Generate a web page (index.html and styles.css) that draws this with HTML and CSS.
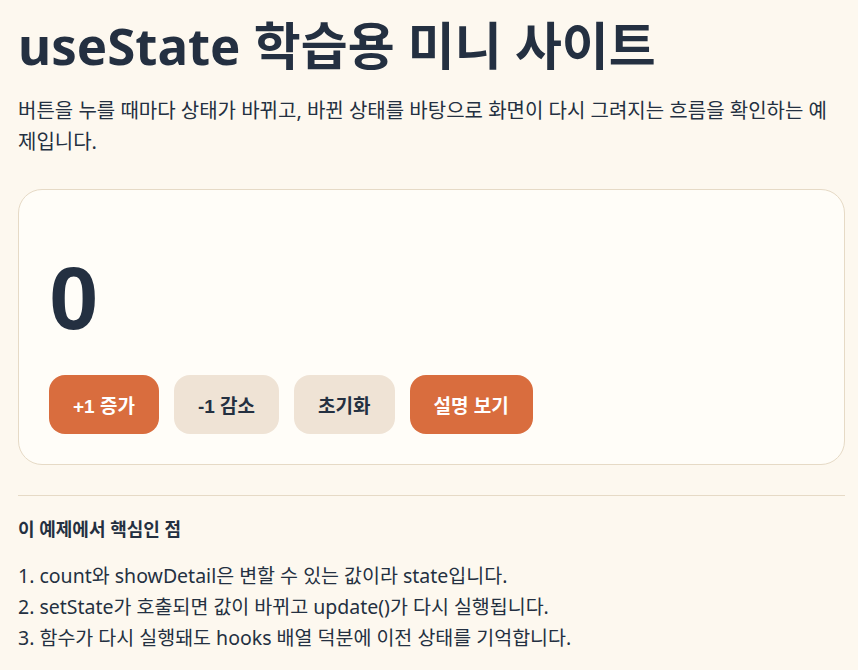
FILE: index.html
```html
<!DOCTYPE html>
<html lang="ko">
<head>
  <meta charset="UTF-8" />
  <meta name="viewport" content="width=device-width, initial-scale=1.0" />
  <title>useState 학습용 미니 사이트</title>
  <link rel="stylesheet" href="styles.css">
</head>
<body>
  <div class="page">
    <h1>useState 학습용 미니 사이트</h1>
    <p class="intro">버튼을 누를 때마다 상태가 바뀌고, 바뀐 상태를 바탕으로 화면이 다시 그려지는 흐름을 확인하는 예제입니다.</p>

    <div class="card">
      <div class="count" id="count">0</div>
      <div class="actions">
        <button class="btn primary" id="inc">+1 증가</button>
        <button class="btn soft" id="dec">-1 감소</button>
        <button class="btn soft" id="reset">초기화</button>
        <button class="btn primary" id="toggle">설명 보기</button>
      </div>
      <p class="detail" id="detail" hidden>지금 count 값은 state로 저장되어 있습니다.</p>
    </div>

    <hr class="divider">

    <h2>이 예제에서 핵심인 점</h2>
    <ol class="points">
      <li>1. count와 showDetail은 변할 수 있는 값이라 state입니다.</li>
      <li>2. setState가 호출되면 값이 바뀌고 update()가 다시 실행됩니다.</li>
      <li>3. 함수가 다시 실행돼도 hooks 배열 덕분에 이전 상태를 기억합니다.</li>
    </ol>
  </div>

  <script>
    let count = 0;
    let showDetail = false;
    const countEl = document.getElementById('count');
    const detailEl = document.getElementById('detail');
    const toggleBtn = document.getElementById('toggle');

    function update() {
      countEl.textContent = count;
      detailEl.hidden = !showDetail;
      toggleBtn.textContent = showDetail ? '설명 숨기기' : '설명 보기';
    }

    document.getElementById('inc').addEventListener('click', function() { count++; update(); });
    document.getElementById('dec').addEventListener('click', function() { count--; update(); });
    document.getElementById('reset').addEventListener('click', function() { count = 0; update(); });
    toggleBtn.addEventListener('click', function() { showDetail = !showDetail; update(); });

    update();
  </script>
</body>
</html>
```

FILE: styles.css
```css
body {
  margin: 0;
  background: #fdf8ef;
  color: #243041;
  font-family: "Noto Sans", "Noto Sans CJK KR", sans-serif;
}
.page {
  padding: 14px 13px 20px 18px;
}
h1 {
  margin: 0;
  font-size: 51px;
  line-height: 62px;
  font-weight: 700;
}
.intro {
  margin: 19px 0 0;
  font-size: 20px;
  line-height: 31px;
}
.card {
  margin-top: 32px;
  padding: 51px 30px 30px;
  background: #fffdf8;
  border: 1px solid #e6dac6;
  border-radius: 24px;
}
.count {
  font-family: "Liberation Sans", "Noto Sans", sans-serif;
  font-size: 89px;
  font-weight: 700;
  line-height: 114px;
}
.actions {
  display: flex;
  gap: 15px;
  margin-top: 20px;
}
.btn {
  height: 59px;
  padding: 0 24px;
  border: none;
  border-radius: 16px;
  font-family: "Liberation Sans", "Noto Sans CJK KR", sans-serif;
  font-size: 19px;
  font-weight: 700;
  cursor: pointer;
}
.primary {
  background: #d96d3e;
  color: #fff;
}
.soft {
  background: #efe3d5;
  color: #243041;
}
.detail {
  margin: 18px 0 0;
  font-size: 17px;
}
.divider {
  margin: 30px 0 0;
  border: none;
  border-top: 1px solid #e6dac6;
}
h2 {
  margin: 19px 0 0;
  font-size: 18px;
  font-weight: 700;
}
.points {
  list-style: none;
  margin: 19px 0 0;
  padding: 0;
  font-size: 19.5px;
  line-height: 31px;
}
```
